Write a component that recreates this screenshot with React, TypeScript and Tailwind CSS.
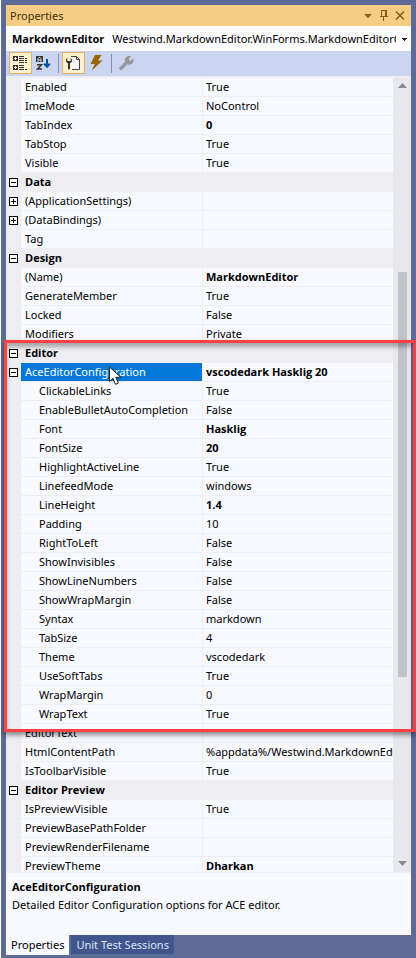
import React from "react";

type Row = {
  name: string;
  value?: string;
  bold?: boolean;
  category?: boolean;
  expander?: "plus" | "minus";
  nested?: boolean;
  selected?: boolean;
};

const cat = (name: string): Row => ({ name, category: true, expander: "minus" });
const sub = (name: string, value: string, bold = false): Row => ({ name, value, bold, nested: true });

const rows: Row[] = [
  { name: "Enabled", value: "True" },
  { name: "ImeMode", value: "NoControl" },
  { name: "TabIndex", value: "0", bold: true },
  { name: "TabStop", value: "True" },
  { name: "Visible", value: "True" },
  cat("Data"),
  { name: "(ApplicationSettings)", expander: "plus" },
  { name: "(DataBindings)", expander: "plus" },
  { name: "Tag" },
  cat("Design"),
  { name: "(Name)", value: "MarkdownEditor", bold: true },
  { name: "GenerateMember", value: "True" },
  { name: "Locked", value: "False" },
  { name: "Modifiers", value: "Private" },
  cat("Editor"),
  { name: "AceEditorConfiguration", value: "vscodedark Hasklig 20", bold: true, expander: "minus", selected: true },
  sub("ClickableLinks", "True"),
  sub("EnableBulletAutoCompletion", "False"),
  sub("Font", "Hasklig", true),
  sub("FontSize", "20", true),
  sub("HighlightActiveLine", "True"),
  sub("LinefeedMode", "windows"),
  sub("LineHeight", "1.4", true),
  sub("Padding", "10"),
  sub("RightToLeft", "False"),
  sub("ShowInvisibles", "False"),
  sub("ShowLineNumbers", "False"),
  sub("ShowWrapMargin", "False"),
  sub("Syntax", "markdown"),
  sub("TabSize", "4"),
  sub("Theme", "vscodedark"),
  sub("UseSoftTabs", "True"),
  sub("WrapMargin", "0"),
  sub("WrapText", "True"),
  { name: "EditorText" },
  { name: "HtmlContentPath", value: "%appdata%/Westwind.MarkdownEditor" },
  { name: "IsToolbarVisible", value: "True" },
  cat("Editor Preview"),
  { name: "IsPreviewVisible", value: "True" },
  { name: "PreviewBasePathFolder" },
  { name: "PreviewRenderFilename" },
  { name: "PreviewTheme", value: "Dharkan", bold: true },
];

function Expander({ kind, label }: { kind: "plus" | "minus"; label: string }) {
  return (
    <button type="button" aria-label={label} className="ml-[3px] block size-[9px]">
      <svg viewBox="0 0 9 9" className="size-[9px]" shapeRendering="crispEdges">
        <rect x="0.5" y="0.5" width="8" height="8" fill="#fff" stroke="#000" />
        <path d={kind === "plus" ? "M2 4.5h5M4.5 2v5" : "M2 4.5h5"} stroke="#000" />
      </svg>
    </button>
  );
}

function PropertyRow({ row }: { row: Row }) {
  const gutter = (
    <td className="border-b border-[#eeeef2] bg-[#eeeef2] p-0 align-middle">
      {row.expander && <Expander kind={row.expander} label={`Toggle ${row.name}`} />}
    </td>
  );
  if (row.category) {
    return (
      <tr className="h-[19px] bg-[#eeeef2]">
        {gutter}
        <th
          colSpan={2}
          scope="colgroup"
          className="border-b border-[#eeeef2] p-0 pl-1 text-left font-['Open_Sans',sans-serif] font-bold"
        >
          {row.name}
        </th>
      </tr>
    );
  }
  return (
    <tr className="h-[19px]">
      {gutter}
      <th
        scope="row"
        className={`overflow-hidden border-r border-b border-[#eeeef2] p-0 text-left font-normal whitespace-nowrap ${
          row.nested ? "pl-[18px]" : "pl-1"
        } ${row.selected ? "bg-[#0078d7] bg-clip-padding text-white" : ""}`}
      >
        {row.name}
      </th>
      <td
        className={`overflow-hidden border-b border-[#eeeef2] p-0 pl-[3px] whitespace-nowrap ${
          row.bold ? "font-['Open_Sans',sans-serif] font-bold" : ""
        }`}
      >
        {row.value}
      </td>
    </tr>
  );
}

function ToolButton({ label, active, children }: { label: string; active?: boolean; children: React.ReactNode }) {
  return (
    <button
      type="button"
      aria-label={label}
      className={`flex h-[22px] w-[23px] items-center justify-center border ${
        active ? "border-[#dfb06e] bg-[#fff0cd]" : "border-transparent"
      }`}
    >
      {children}
    </button>
  );
}

const wrench =
  "M14.6 3.4 12 6 10 4 12.6 1.4C10.8.6 8.8.9 7.5 2.3 6.3 3.5 6 5.2 6.6 6.8L1.2 12.2a1.6 1.6 0 0 0 0 2.4 1.6 1.6 0 0 0 2.4 0L9.1 9.3c1.6.6 3.4.4 4.6-.8 1.4-1.4 1.7-3.4.9-5.1Z";

export default function App() {
  return (
    <div className="border-l border-white bg-[#5d6b99] px-[5px] pt-[5px] pb-[3px] font-['Noto_Sans','Open_Sans',sans-serif] text-[11px] leading-[18px] text-black">
      <header className="flex h-[21px] items-center bg-[#f5cc84] pr-[3px] pl-1">
        <h1 className="flex-1 text-[#3f3208]">Properties</h1>
        <button type="button" aria-label="Window position" className="flex w-4 justify-center">
          <svg width="8" height="4" viewBox="0 0 8 4">
            <path d="M0 0h8L4 4Z" fill="#855f12" />
          </svg>
        </button>
        <button type="button" aria-label="Auto hide" className="flex w-4 justify-center">
          <svg width="8" height="11" viewBox="0 0 8 11" shapeRendering="crispEdges" fill="#855f12">
            <path d="M1 0h6v6h1v1H4v4H3V7H0V6h1ZM2 1v5h3V1Z" fillRule="evenodd" />
          </svg>
        </button>
        <button type="button" aria-label="Close" className="flex w-4 justify-center">
          <svg width="10" height="9" viewBox="0 0 10 9">
            <path d="M1 0.500 9 8.500M9 0.500 1 8.500" stroke="#855f12" strokeWidth="1.500" />
          </svg>
        </button>
      </header>

      <div className="flex h-[25px] items-center bg-[#fcfcfe] pl-1.5">
        <label htmlFor="component" className="font-['Open_Sans',sans-serif] font-bold">
          MarkdownEditor
        </label>
        <div className="relative ml-2 min-w-0 flex-1">
          <select
            id="component"
            className="block w-full appearance-none overflow-hidden bg-transparent pr-[15px] whitespace-nowrap outline-none"
          >
            <option>Westwind.MarkdownEditor.WinForms.MarkdownEditorControl</option>
          </select>
          <svg
            width="5"
            height="3"
            viewBox="0 0 5 3"
            className="pointer-events-none absolute top-2 right-1"
            shapeRendering="crispEdges"
          >
            <path d="M0 0h5v1H4v1H3v1H2V2H1V1H0Z" fill="#1b293e" />
          </svg>
        </div>
      </div>

      <div role="toolbar" aria-label="View" className="flex h-[25px] items-start bg-[#ccd5f0] px-[3px] pt-px">
        <ToolButton label="Categorized" active>
          <svg width="15" height="16" viewBox="0 0 15 16" shapeRendering="crispEdges">
            <path
              d="M0 1h5v5H0ZM0 10h5v5H0ZM6 1h5v1H6ZM6 3h5v1H6ZM6 5h5v1H6ZM6 7h5v1H6ZM6 10h5v1H6ZM6 12h5v1H6ZM6 14h5v1H6ZM12 3h2v1h-2ZM12 5h2v1h-2ZM12 7h2v1h-2ZM12 14h2v1h-2Z"
              fill="#333"
            />
            <path d="M1 3h3v1H1ZM2 2h1v3H2ZM1 12h3v1H1ZM2 11h1v3H2Z" fill="#fff0cd" />
          </svg>
        </ToolButton>
        <ToolButton label="Alphabetical">
          <svg width="15" height="16" viewBox="0 0 15 16">
            <path d="M0 1h7v6H0Z" fill="#333" />
            <path d="M2 7V3.500L3 2.300h1l1 1.200V7M2 5h3" fill="none" stroke="#ccd5f0" />
            <path d="M1 9.700h4.500L1.500 14H6" fill="none" stroke="#333" strokeWidth="1.500" />
            <path d="M11 4v8M8.200 8.800l2.800 2.900 2.800-2.900" fill="none" stroke="#00539c" strokeWidth="2" />
          </svg>
        </ToolButton>
        <span className="mx-[3px] mt-0.5 h-[19px] w-px bg-[#8591a9]" />
        <ToolButton label="Properties" active>
          <svg width="15" height="16" viewBox="0 0 15 16">
            <path d="M5 1.500h5.500l3 3v10H6" fill="#f5f5fa" stroke="#424242" />
            <path d="M10.500 1.500v3h3" fill="none" stroke="#424242" />
            <path
              d="M1.300 3C.4 3.600 0 4.600 0 5.500c0 1.300.8 2.300 2 2.800V13.500a1 1 0 0 0 2 0V8.300C5.200 7.800 6 6.800 6 5.500 6 4.600 5.600 3.600 4.700 3v3H1.300Z"
              fill="#333"
            />
          </svg>
        </ToolButton>
        <ToolButton label="Events">
          <svg width="13" height="16" viewBox="0 0 13 16">
            <path d="M5 0h6.500L8 5.500h4.500L2 15.500l2.600-6.500H.5Z" fill="#9a6400" />
          </svg>
        </ToolButton>
        <span className="mx-[3px] mt-0.5 h-[19px] w-px bg-[#8591a9]" />
        <ToolButton label="Property pages">
          <svg width="17" height="16" viewBox="0 0 16 16">
            <path d={wrench} fill="#96979f" />
          </svg>
        </ToolButton>
      </div>

      <main className="relative flex h-[797px] border-t-2 border-b border-[#eeeef2] bg-[#f7f9fe]">
        <div className="min-w-0 flex-1 overflow-hidden">
          <table className="w-full table-fixed border-separate border-spacing-0" aria-label="Component properties">
            <colgroup>
              <col className="w-[15px]" />
              <col className="w-[182px]" />
              <col />
            </colgroup>
            <tbody>
              {rows.map((row) => (
                <PropertyRow key={row.name} row={row} />
              ))}
            </tbody>
          </table>
        </div>
        <div className="flex w-[18px] flex-col items-center bg-[#e8e8ec] pt-[5px] pb-1.5">
          <svg width="9" height="5" viewBox="0 0 9 5">
            <path d="M0 5h9L4.500 0Z" fill="#868999" />
          </svg>
          <div className="mt-[184px] h-[405px] w-[9px] bg-[#c2c3c9]" />
          <svg width="9" height="5" viewBox="0 0 9 5" className="mt-auto">
            <path d="M0 0h9L4.500 5Z" fill="#868999" />
          </svg>
        </div>

        <div className="pointer-events-none absolute top-[262px] -right-[5px] -left-[2px] h-[392px] border-[3px] border-[#fc4144] shadow-[0_3px_5px_rgba(0,0,0,0.45),inset_0_4px_4px_rgba(0,0,0,0.3)]" />
        <svg
          width="13"
          height="20"
          viewBox="0 0 13 20"
          className="pointer-events-none absolute top-[288px] left-[103px] drop-shadow-sm"
        >
          <path
            d="M.5 1v14.500L4 12.300l2.500 6 2.800-1.200-2.500-5.800h5Z"
            fill="#fff"
            stroke="#222"
          />
        </svg>
      </main>

      <section className="h-[62px] bg-[#f7f9fe] px-1.5 pt-[5px]">
        <h2 className="font-['Open_Sans',sans-serif] font-bold">AceEditorConfiguration</h2>
        <p>Detailed Editor Configuration options for ACE editor.</p>
      </section>

      <nav className="flex h-5 gap-0.5" role="tablist">
        <button type="button" role="tab" aria-selected="true" className="bg-[#f7f9fe] px-[5px]">
          Properties
        </button>
        <button type="button" role="tab" aria-selected="false" className="mb-px bg-[#40568d] px-[5px] text-[#dfe5f7]">
          Unit Test Sessions
        </button>
      </nav>
    </div>
  );
}
